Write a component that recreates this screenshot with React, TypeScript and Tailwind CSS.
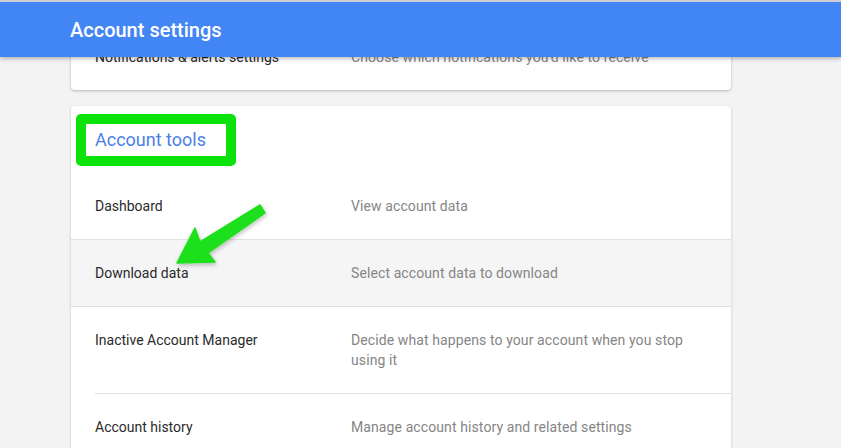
import React from 'react';

interface ToolRow {
  label: string;
  description: string;
  active?: boolean;
  fullBorder?: boolean;
  last?: boolean;
}

const rows: ToolRow[] = [
  { label: 'Dashboard', description: 'View account data', fullBorder: true },
  { label: 'Download data', description: 'Select account data to download', active: true, fullBorder: true },
  { label: 'Inactive Account Manager', description: 'Decide what happens to your account when you stop using it' },
  { label: 'Account history', description: 'Manage account history and related settings', last: true },
];

const Row: React.FC<{ row: ToolRow }> = ({ row }) => (
  <div className={row.active ? 'bg-[#f5f5f5]' : ''}>
    <div
      className={`flex py-[23px] ${
        row.last ? '' : row.fullBorder ? 'border-b border-[#e0e0e0]' : 'ml-6 border-b border-[#e0e0e0]'
      } ${row.fullBorder || row.last ? 'pl-6' : ''}`}
    >
      <div className="w-[256px] shrink-0 text-[14px] leading-5 text-[#2a2a2a]">{row.label}</div>
      <div className="flex-1 pr-6 text-[14px] leading-5 tracking-[0.1px] text-[#858585]">{row.description}</div>
    </div>
  </div>
);

const App: React.FC = () => {
  return (
    <div
      className="relative h-[448px] w-[841px] overflow-hidden bg-[#f3f3f3]"
      style={{ fontFamily: 'Roboto, "Noto Sans", sans-serif' }}
    >
      {/* Scrolled content */}
      <div className="flex flex-col gap-4 pt-[24px] pl-[71px]">
        <div className="w-[660px] rounded-b-sm bg-white shadow-[0_1px_3px_rgba(0,0,0,0.25)]">
          <div className="flex py-[23px] pl-6">
            <div className="w-[256px] shrink-0 text-[14px] leading-5 text-[#2a2a2a]">
              Notifications &amp; alerts settings
            </div>
            <div className="flex-1 pr-6 text-[14px] leading-5 tracking-[0.1px] text-[#858585]">
              Choose which notifications you'd like to receive
            </div>
          </div>
        </div>

        <div className="w-[660px] rounded-sm bg-white shadow-[0_1px_3px_rgba(0,0,0,0.2)]">
          <div className="relative flex h-[67px] items-center pl-6">
            <h2 className="text-[18px] leading-6 text-[#4a7fe8]">Account tools</h2>
            {/* highlight box */}
            <div className="absolute left-[5px] top-[8px] h-[52px] w-[160px] rounded-[5px] border-[10px] border-[#0ae20a]" />
          </div>
          {rows.map((row) => (
            <Row key={row.label} row={row} />
          ))}
        </div>
      </div>

      {/* App bar */}
      <div className="absolute left-0 right-0 top-0 flex h-[57px] items-center border-t-2 border-[#cfcfcf] bg-[#4285f4] pl-[70px] shadow-[0_2px_4px_rgba(0,0,0,0.25)]">
        <h1 className="text-[20px] font-medium text-white">Account settings</h1>
      </div>

      {/* Annotation arrow */}
      <svg className="pointer-events-none absolute inset-0" width="841" height="448" viewBox="0 0 841 448">
        <defs>
          <filter id="arrowShadow" x="-20%" y="-20%" width="140%" height="140%">
            <feDropShadow dx="1" dy="2" stdDeviation="2" floodColor="#000" floodOpacity="0.25" />
          </filter>
        </defs>
        <polygon
          points="260,205 265,213 208,253 215,262 177,263 195,228 200,242"
          fill="#1ee01e"
          strokeLinejoin="round"
          stroke="#1ee01e"
          strokeWidth="1.5"
          filter="url(#arrowShadow)"
        />
      </svg>
    </div>
  );
};

export default App;
